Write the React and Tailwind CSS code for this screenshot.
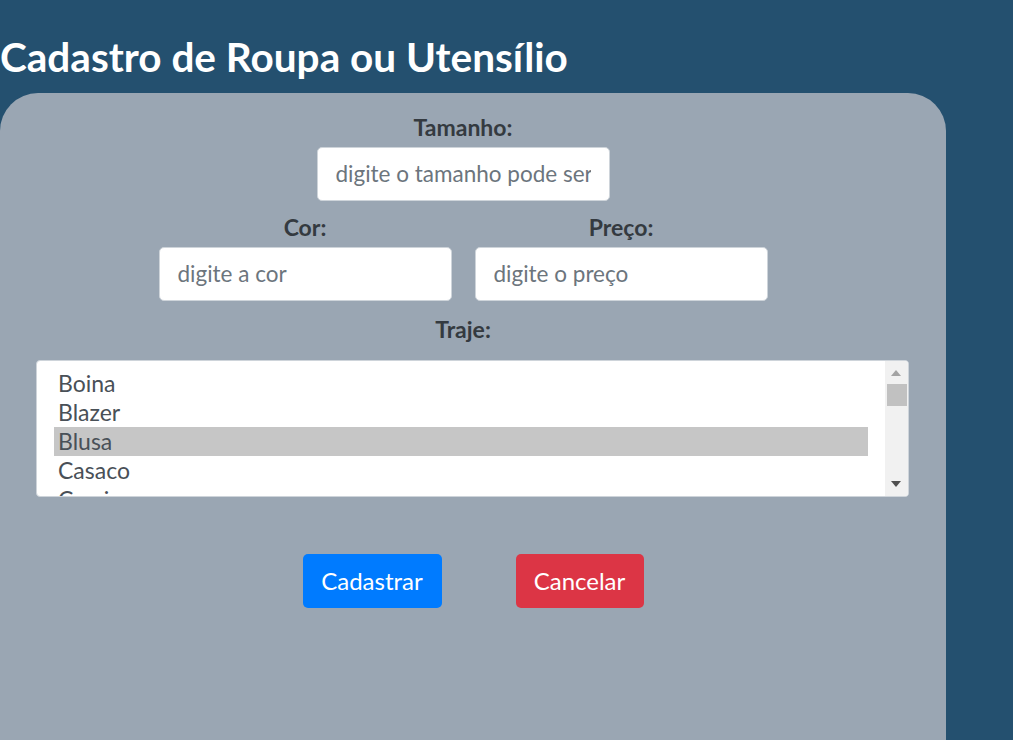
import React from "react";

const font = { fontFamily: "Lato, 'Noto Sans', sans-serif" };

function Field({ label, placeholder }) {
  return (
    <div className="flex flex-col items-center">
      <label className="text-[23px] font-bold leading-[28px] text-[#343a40]">{label}</label>
      <div className="mt-[6px] h-[54px] w-[293px] rounded-[5px] border border-[#ced4da] bg-white pl-[18px] pr-[18px] flex items-center">
        <div className="overflow-hidden w-full">
          <span className="whitespace-nowrap text-[22.5px] text-[#6c757d]">{placeholder}</span>
        </div>
      </div>
    </div>
  );
}

export default function App() {
  const items = ["Boina", "Blazer", "Blusa", "Casaco", "Camisa"];
  return (
    <div style={font} className="h-[740px] w-full overflow-hidden bg-[#24506f]">
      <h1 className="pt-[33px] text-[40.5px] font-bold leading-[48px] text-white">
        Cadastro de Roupa ou Utensílio
      </h1>
      <div className="mt-[12px] h-[720px] w-[946px] rounded-[38px] bg-[#9aa6b3] pt-[20px]">
        <div className="w-[926px] flex flex-col items-center">
          <Field label="Tamanho:" placeholder="digite o tamanho pode ser" />
          <div className="mt-[12px] flex gap-[23px]">
            <Field label="Cor:" placeholder="digite a cor" />
            <Field label="Preço:" placeholder="digite o preço" />
          </div>
          <div className="mt-[14px] text-[23px] font-bold leading-[28px] text-[#343a40]">Traje:</div>
        </div>
        <div className="ml-[36px] mt-[17px] flex h-[137px] w-[873px] overflow-hidden rounded-[4px] border border-[#ced4da] bg-white">
          <div className="flex-1 overflow-hidden pl-[17px] pr-[17px] pt-[8px]">
            {items.map((it) => (
              <div
                key={it}
                className={
                  "h-[29px] pl-[4px] text-[23px] leading-[29px] text-[#495057] " +
                  (it === "Blusa" ? "bg-[#c6c6c6] text-[#222]" : "")
                }
              >
                {it}
              </div>
            ))}
          </div>
          <div className="relative w-[23px] bg-[#f1f1f1]">
            <div className="absolute left-[6px] top-[9px] h-0 w-0 border-x-[5px] border-b-[6px] border-x-transparent border-b-[#a3a3a3]" />
            <div className="absolute left-[2px] top-[23px] h-[22px] w-[20px] bg-[#c1c1c1]" />
            <div className="absolute left-[6px] bottom-[9px] h-0 w-0 border-x-[5px] border-t-[6px] border-x-transparent border-t-[#505050]" />
          </div>
        </div>
        <div className="mt-[57px] flex justify-center gap-[74px]">
          <button className="h-[54px] w-[139px] rounded-[5px] bg-[#007bff] text-[24px] text-white">Cadastrar</button>
          <button className="h-[54px] w-[128px] rounded-[5px] bg-[#dc3545] text-[24px] text-white">Cancelar</button>
        </div>
      </div>
    </div>
  );
}
